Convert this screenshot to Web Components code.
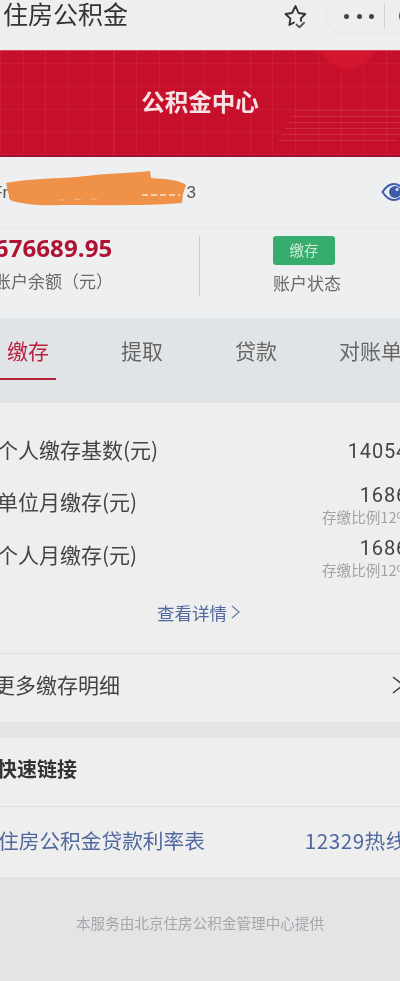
<!DOCTYPE html>
<html lang="zh">
<head>
<meta charset="utf-8">
<title>住房公积金</title>
<style>
  html, body { margin: 0; padding: 0; background: #e2e4e6; }
  body { width: 400px; height: 981px; overflow: hidden; font-family: "Noto Sans CJK SC", "Noto Sans", sans-serif; }
  gjj-page { filter: blur(.5px); }
</style>
</head>
<body>
<gjj-page>
  <gjj-topbar title-text="住房公积金"></gjj-topbar>
  <gjj-banner>公积金中心</gjj-banner>
  <gjj-account></gjj-account>
  <gjj-tabs></gjj-tabs>
  <gjj-detail></gjj-detail>
  <gjj-links></gjj-links>
  <gjj-footer>本服务由北京住房公积金管理中心提供</gjj-footer>
</gjj-page>

<script>
class GjjPage extends HTMLElement{
    constructor(){
        super();
        this.attachShadow({mode:'open'});
        this.shadowRoot.innerHTML = `
        <style>
            :host{ display:flex; flex-direction:column; width:400px; height:981px; overflow:hidden; background:#e2e4e6; }
        </style>
        <slot></slot>`;
    }
}

class GjjTopbar extends HTMLElement{
    constructor(){
        super();
        this.attachShadow({mode:'open'});
        this.shadowRoot.innerHTML = `
        <style>
            :host{ display:flex; align-items:flex-start; height:50px; background:#eeeeee; color:#333; overflow:hidden; }
            h1{ margin:-7px 0 0 3px; font-size:25px; line-height:40px; font-weight:400; flex:1; white-space:nowrap; }
            svg.star{ width:26px; height:28px; margin:2px 16px 0 0; flex:none; }
            .capsule{ flex:none; box-sizing:border-box; width:90px; height:36px; margin:-2px -15px 0 0; padding-left:18px;
                border:1px solid #e7e7e7; border-radius:18px 0 0 18px; display:flex; align-items:center; gap:7.5px; }
            .capsule i{ width:5px; height:5px; border-radius:50%; background:#444; flex:none; }
            .capsule b{ width:1px; height:24px; background:#d2d2d2; margin-left:2px; flex:none; }
            .capsule u{ width:12px; height:12px; margin-left:7px; border:2px solid #555; border-radius:50%; flex:none; }
        </style>
        <h1>${this.getAttribute('title-text')}</h1>
        <svg class="star" viewBox="0 0 26 28" fill="none" stroke="#333" stroke-width="1.9" stroke-linejoin="round" stroke-linecap="round">
            <path d="M11 20.5 6.4 23l1-6.4L2.5 12l6.6-1L12.5 4l3 7 6.8 1-4.6 4.6.4 2.4"/>
            <path d="m13.5 22.6 3 2.6 4.6-4.4" stroke="#555"/>
        </svg>
        <div class="capsule"><i></i><i></i><i></i><b></b><u></u></div>`;
    }
}

class GjjBanner extends HTMLElement{
    constructor(){
        super();
        this.attachShadow({mode:'open'});
        this.shadowRoot.innerHTML = `
        <style>
            :host{ display:flex; position:relative; overflow:hidden; align-items:center; justify-content:center; box-sizing:border-box;
                height:107px; background-color:#c70f2b; border-top:1px solid #d8475c; border-bottom:2px solid #9e1030;
                background-image:
                  repeating-linear-gradient(90deg, rgba(255,255,255,.06) 0 1px, transparent 1px 22.7px),
                  repeating-linear-gradient(0deg, rgba(255,255,255,.04) 0 1px, transparent 1px 22.7px); }
            .blob{ position:absolute; right:22px; top:-52px; width:60px; height:70px; border-radius:50%; background:#d31530; }
            .dash{ position:absolute; right:-8px; bottom:14px; width:120px; height:36px; transform:skewX(-30deg); opacity:.14;
                background-image:repeating-linear-gradient(0deg, rgba(255,255,255,.8) 0 1px, transparent 1px 6px); }
            span{ position:relative; color:#f6e3e6; font-size:23.5px; font-weight:700; line-height:30px; margin-top:-4px; }
        </style>
        <div class="blob"></div><div class="dash"></div>
        <span><slot></slot></span>`;
    }
}

class GjjAccount extends HTMLElement{
    constructor(){
        super();
        this.attachShadow({mode:'open'});
        this.shadowRoot.innerHTML = `
        <style>
            :host{ display:block; height:161px; background:#eeeff0; color:#666; overflow:hidden; }
            .num{ position:relative; display:flex; align-items:center; justify-content:space-between; box-sizing:border-box; height:71px; border-bottom:1px dashed #e2e2e2; }
            .no{ margin:2px 0 0 -8px; width:204px; display:flex; justify-content:space-between; font:17px/24px "Liberation Sans", sans-serif; color:#555; }
            .scribble{ position:absolute; left:0; top:13px; width:186px; height:38px; }
            .eye{ width:26px; height:20px; margin:-1px -7px 0 0; flex:none; }
            .grid{ display:grid; grid-template-columns:200px 200px; height:90px; }
            .cell{ display:flex; flex-direction:column; box-sizing:border-box; height:60px; margin-top:8px; }
            .left{ border-right:1.5px solid #c9cacb; }
            .money{ margin:-4px 0 0 -19px; font:700 24px/32px "Open Sans", "Liberation Sans", sans-serif; color:#b01234; letter-spacing:.1px; white-space:nowrap; }
            .cap{ font-size:17px; line-height:24px; color:#6a6a6a; white-space:nowrap; }
            .left .cap{ margin:5px 0 0 -6px; }
            .right{ padding-left:73px; align-items:flex-start; }
            .tag{ width:62px; height:29px; border-radius:3px; background:#36ad6d; color:#cdebd7; font-size:14.5px; line-height:27px; text-align:center; }
            .right .cap{ margin-top:6px; }
        </style>
        <div class="num">
            <div class="no"><span>Fri</span><span>3</span></div>
            <svg class="scribble" viewBox="0 0 186 38">
                <path fill="#ef9148" d="M6 13 C30 8 60 9 86 6 C110 3 130 3 150 1 L151 8 C165 9 180 10 186 15 L183 24 L182 33 C150 36 100 35 60 35 C40 36 20 34 10 30 Z"/>
                <path fill="none" stroke="#f6e2cf" stroke-width="1.5" stroke-dasharray="6 3" d="M142 25 L180 25"/>
                <path fill="none" stroke="#f3b27e" stroke-width="1.2" stroke-dasharray="7 9" d="M58 30 L100 29"/>
            </svg>
            <svg class="eye" viewBox="0 0 26 20" fill="none">
                <path d="M1.5 10C5 4.5 8.500 2 13 2s8 2.500 11.500 8C21 15.500 17.500 18 13 18S5 15.500 1.500 10Z" stroke="#3f5cab" stroke-width="2"/>
                <circle cx="14" cy="10" r="6" fill="#3f5cab"/><circle cx="16" cy="7.500" r="1.500" fill="#dfe5f3"/>
            </svg>
        </div>
        <div class="grid">
            <div class="cell left"><div class="money">1676689.95</div><div class="cap">账户余额（元）</div></div>
            <div class="cell right"><div class="tag">缴存</div><div class="cap">账户状态</div></div>
        </div>`;
    }
}

class GjjTabs extends HTMLElement{
    constructor(){
        super();
        this.attachShadow({mode:'open'});
        this.shadowRoot.innerHTML = `
        <style>
            :host{ display:flex; height:85px; background:#e1e4e6; overflow:hidden; font-size:21px; color:#666; }
            div{ flex:none; width:114px; box-sizing:border-box; height:62px; padding-top:16px; line-height:32px; text-align:center; white-space:nowrap; }
            .on{ color:#b8223f; border-bottom:2.5px solid #b8223f; width:56px; margin-right:29px; }
            .last{ width:70px; text-align:left; padding-left:26px; overflow:visible; }
        </style>
        <div class="on">缴存</div><div>提取</div><div>贷款</div><div class="last">对账单</div>`;
    }
}

class GjjDetail extends HTMLElement{
    constructor(){
        super();
        this.attachShadow({mode:'open'});
        this.shadowRoot.innerHTML = `
        <style>
            :host{ display:block; height:319px; background:#eeeeee; color:#444; overflow:hidden; }
            .row{ display:flex; justify-content:space-between; align-items:flex-start; height:53px; margin:0 -10px 0 -3px; }
            .row.first{ margin-top:21px; height:52px; }
            .label{ font-size:21px; line-height:50px; white-space:nowrap; }
            .val{ display:flex; flex-direction:column; align-items:flex-end; }
            .val b{ font:400 20px/30px "Roboto", sans-serif; letter-spacing:.8px; margin:12px 2px 0 0; }
            .row.two .val b{ margin-top:4px; }
            .val small{ font-size:14.600px; line-height:20px; color:#a3a3a3; white-space:nowrap; margin-top:-3px; }
            .more{ display:flex; justify-content:center; align-items:center; gap:3px; height:36px; margin-top:12px; padding-right:2px; color:#50689f; font-size:17.500px; }
            .more svg{ width:11px; height:18px; }
            .all{ display:flex; justify-content:space-between; align-items:center; height:66px; margin:23px 0 0; border-top:1px solid #dedede; font-size:21px; }
            .all span{ margin-left:-6px; margin-top:-6px; }
            .all svg{ width:14px; height:22px; margin:-4px -5px 0 0; }
        </style>
        <div class="row first"><div class="label">个人缴存基数(元)</div><div class="val"><b>14054</b></div></div>
        <div class="row two"><div class="label">单位月缴存(元)</div><div class="val"><b>1686</b><small>存缴比例12%</small></div></div>
        <div class="row two"><div class="label">个人月缴存(元)</div><div class="val"><b>1686</b><small>存缴比例12%</small></div></div>
        <div class="more"><span>查看详情</span><svg viewBox="0 0 11 18" fill="none" stroke="#6b7fae" stroke-width="1.300"><path d="m2 3 7 6-7 6"/></svg></div>
        <div class="all"><span>更多缴存明细</span><svg viewBox="0 0 14 22" fill="none" stroke="#444" stroke-width="1.600"><path d="m2 3 10 8-10 8"/></svg></div>`;
    }
}

class GjjLinks extends HTMLElement{
    constructor(){
        super();
        this.attachShadow({mode:'open'});
        this.shadowRoot.innerHTML = `
        <style>
            :host{ display:block; height:139px; margin-top:16px; background:#eeeeee; overflow:hidden; }
            h2{ margin:0; height:68px; line-height:62px; font-size:20px; font-weight:700; color:#333; border-bottom:1px solid #dfdfdf; text-indent:-3px; }
            .row{ display:flex; justify-content:space-between; height:70px; line-height:66px; color:#50689f; font-size:20.700px; white-space:nowrap; margin:0 -7px 0 -2px; }
            .tel{ letter-spacing:.5px; }
        </style>
        <h2>快速链接</h2>
        <div class="row"><span>住房公积金贷款利率表</span><span class="tel">12329热线</span></div>`;
    }
}

class GjjFooter extends HTMLElement{
    constructor(){
        super();
        this.attachShadow({mode:'open'});
        this.shadowRoot.innerHTML = `
        <style>
            :host{ display:block; flex:1; background:#e2e4e6; color:#a4a6a8; font-size:14.600px; line-height:20px; text-align:center; padding-top:36px; }
        </style>
        <slot></slot>`;
    }
}

customElements.define('gjj-page',GjjPage);
customElements.define('gjj-topbar',GjjTopbar);
customElements.define('gjj-banner',GjjBanner);
customElements.define('gjj-account',GjjAccount);
customElements.define('gjj-tabs',GjjTabs);
customElements.define('gjj-detail',GjjDetail);
customElements.define('gjj-links',GjjLinks);
customElements.define('gjj-footer',GjjFooter);
</script>
</body>
</html>
